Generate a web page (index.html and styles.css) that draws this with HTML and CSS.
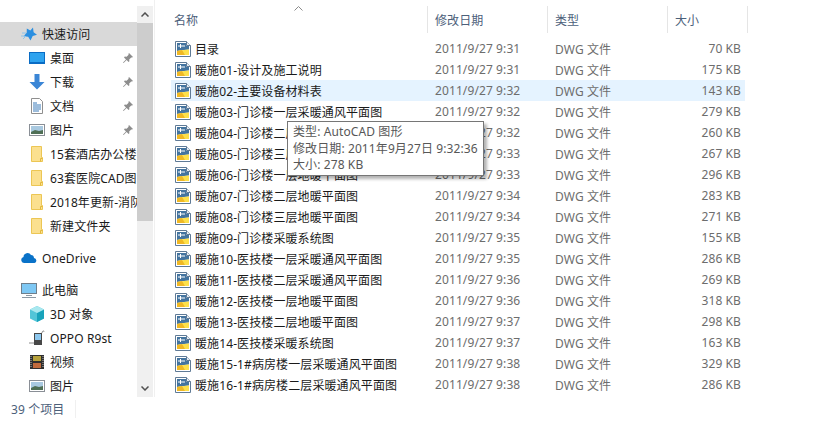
FILE: index.html
```html
<!DOCTYPE html>
<html lang="zh-CN">
<head>
  <meta charset="UTF-8" />
  <title>文件资源管理器</title>
  <link rel="stylesheet" href="styles.css">
</head>
<body>

  <svg class="defs" width="0" height="0">
    <symbol id="dwg" viewBox="0 0 16 16">
      <path d="M0.500 0.500h11l4 4v11h-15z" fill="#fff" stroke="#5f7a96"/>
      <path d="M2 2h9v3h3v3.500l-5 .5-7 1z" fill="#44749f"/>
      <path d="M2 10l7-1 5-.5v5.500h-12z" fill="#fde04a"/>
      <path d="M2 10l5-1 3 5h-8z" fill="#f0b824"/>
      <path d="M3 5h7M5.500 3v4" stroke="#fff"/>
      <path d="M11.500 0.500v4h4" fill="#e6ecf2" stroke="#5f7a96"/>
    </symbol>
    <symbol id="folder" viewBox="0 0 12 16">
      <path d="M.5 .5h10v11h1v4h-11z" fill="#fbe08f" stroke="#ecc654"/>
      <path d="M9.500 15.500v-3h2" fill="none" stroke="#e2b83f"/>
    </symbol>
    <symbol id="pin" viewBox="0 0 12 12">
      <path d="M7 1l4 4-1 .6-.8-.2-2 2 .2 1.800-.8.800-2-2-3 3-.6-.6 3-3-2-2 .8-.8 1.800.2 2-2-.2-.8z" fill="#8d8d8d"/>
    </symbol>
    <symbol id="picture" viewBox="0 0 16 12">
      <rect x="0.500" y="0.500" width="15" height="11" fill="#fff" stroke="#8a8f96"/>
      <rect x="2" y="2" width="12" height="8" fill="#a9c9e0"/>
      <path d="M2 8l4-2 4 1 4-1v4h-12z" fill="#4f6f55"/>
    </symbol>
  </svg>

  <div class="window">
    <nav class="sidebar">
      <div class="tree">
        <div class="tree-item top active">
          <svg class="ico" viewBox="0 0 16 16"><path d="M12 1.500l.6 4.800 3.400 2.500-4.300 1.100-2.200 4.600-2.300-3.800-4.700-.4 3.200-3.500.1-4.200 3.600 2z" fill="#2b8fe0"/><path d="M1 7h4M0 10h4M2 13l3-3" stroke="#8cc4ec"/></svg>
          <span>快速访问</span>
        </div>
        <div class="tree-item">
          <svg class="ico" viewBox="0 0 16 16"><rect x="0" y="2" width="16" height="12" fill="#0a6cc4"/><rect x="1" y="3" width="14" height="9" fill="#2ea3ef"/></svg>
          <span>桌面</span>
          <svg class="pin"><use href="#pin"/></svg>
        </div>
        <div class="tree-item">
          <svg class="ico" viewBox="0 0 16 16"><path d="M5.500 0h5v8h5l-7.500 7.500-7.500-7.500h5z" fill="#3b86d6"/></svg>
          <span>下载</span>
          <svg class="pin"><use href="#pin"/></svg>
        </div>
        <div class="tree-item">
          <svg class="ico" viewBox="0 0 16 16"><path d="M2.500 .5h8l3 3v12h-11z" fill="#fff" stroke="#8f8f8f"/><path d="M4 5h4M4 7h8M4 9h8M4 11h8M4 13h6" stroke="#3a7ab8"/></svg>
          <span>文档</span>
          <svg class="pin"><use href="#pin"/></svg>
        </div>
        <div class="tree-item">
          <svg class="ico"><use href="#picture"/></svg>
          <span>图片</span>
          <svg class="pin"><use href="#pin"/></svg>
        </div>
        <div class="tree-item"><svg class="ico"><use href="#folder"/></svg><span>15套酒店办公楼</span></div>
        <div class="tree-item"><svg class="ico"><use href="#folder"/></svg><span>63套医院CAD图</span></div>
        <div class="tree-item"><svg class="ico"><use href="#folder"/></svg><span>2018年更新-消防</span></div>
        <div class="tree-item"><svg class="ico"><use href="#folder"/></svg><span>新建文件夹</span></div>

        <div class="tree-item top group">
          <svg class="ico" viewBox="0 0 16 16"><path d="M3 13a3 3 0 0 1-.5-5.900 4 4 0 0 1 7.500-2 3.200 3.200 0 0 1 3 3 2.500 2.500 0 0 1 .5 4.900z" fill="#0a72c8"/></svg>
          <span>OneDrive</span>
        </div>

        <div class="tree-item top group">
          <svg class="ico" viewBox="0 0 16 16"><rect x="0.500" y="1.500" width="15" height="10" fill="#7ec8f4" stroke="#6f7f8c"/><path d="M5 13.500h6M1 15.500h14" stroke="#8b98a3"/></svg>
          <span>此电脑</span>
        </div>
        <div class="tree-item">
          <svg class="ico" viewBox="0 0 16 16"><path d="M8 0l7 3.500v9l-7 3.500-7-3.500v-9z" fill="#52c5d8"/><path d="M8 7l7-3.500v9l-7 3.500z" fill="#18a3bb"/><path d="M8 7l-7-3.500 7-3.500 7 3.500z" fill="#a9e8ef"/></svg>
          <span>3D 对象</span>
        </div>
        <div class="tree-item">
          <svg class="ico" viewBox="0 0 16 16"><rect x="5" y="3" width="8" height="12" fill="#474747"/><rect x="6" y="4" width="6" height="6" fill="#8cc7ee"/><path d="M0 13h5M13 3c0-2 2-3 2-1" stroke="#8a8a8a" fill="none"/></svg>
          <span>OPPO R9st</span>
        </div>
        <div class="tree-item">
          <svg class="ico" viewBox="0 0 16 16"><rect x="1" y="1" width="14" height="14" fill="#2e2e2e"/><rect x="4" y="2" width="8" height="5" fill="#b7a23c"/><rect x="4" y="9" width="8" height="5" fill="#c06a3c"/><path d="M2 2v12M14 2v12" stroke="#bbb" stroke-dasharray="1 1"/></svg>
          <span>视频</span>
        </div>
        <div class="tree-item">
          <svg class="ico"><use href="#picture"/></svg>
          <span>图片</span>
        </div>
      </div>

      <div class="scrollbar">
        <div class="arrow"><svg width="8" height="5" viewBox="0 0 8 5"><path d="M.5 4.500l3.500-3.500 3.500 3.500" fill="none" stroke="#505050" stroke-width="1.500"/></svg></div>
        <div class="thumb"></div>
        <div class="track"></div>
        <div class="arrow"><svg width="8" height="5" viewBox="0 0 8 5"><path d="M.5 .5l3.500 3.500 3.500-3.500" fill="none" stroke="#505050" stroke-width="1.500"/></svg></div>
      </div>
    </nav>

    <main class="files">
      <div class="head">
        <div class="col c-name">名称<svg class="sort" width="9" height="5" viewBox="0 0 9 5"><path d="M.5 4.500l4-4 4 4" fill="none" stroke="#8a8a8a"/></svg></div>
        <div class="col c-date">修改日期</div>
        <div class="col c-type">类型</div>
        <div class="col c-size">大小</div>
      </div>

      <div class="list">
        <div class="row"><div class="c-name"><svg class="dwg"><use href="#dwg"/></svg>目录</div><div class="c-date">2011/9/27 9:31</div><div class="c-type">DWG 文件</div><div class="c-size">70 KB</div></div>
        <div class="row"><div class="c-name"><svg class="dwg"><use href="#dwg"/></svg>暖施01-设计及施工说明</div><div class="c-date">2011/9/27 9:31</div><div class="c-type">DWG 文件</div><div class="c-size">175 KB</div></div>
        <div class="row hover"><div class="c-name"><svg class="dwg"><use href="#dwg"/></svg>暖施02-主要设备材料表</div><div class="c-date">2011/9/27 9:32</div><div class="c-type">DWG 文件</div><div class="c-size">143 KB</div></div>
        <div class="row"><div class="c-name"><svg class="dwg"><use href="#dwg"/></svg>暖施03-门诊楼一层采暖通风平面图</div><div class="c-date">2011/9/27 9:32</div><div class="c-type">DWG 文件</div><div class="c-size">279 KB</div></div>
        <div class="row"><div class="c-name"><svg class="dwg"><use href="#dwg"/></svg>暖施04-门诊楼二层采暖通风平面图</div><div class="c-date">2011/9/27 9:32</div><div class="c-type">DWG 文件</div><div class="c-size">260 KB</div></div>
        <div class="row"><div class="c-name"><svg class="dwg"><use href="#dwg"/></svg>暖施05-门诊楼三层采暖通风平面图</div><div class="c-date">2011/9/27 9:33</div><div class="c-type">DWG 文件</div><div class="c-size">267 KB</div></div>
        <div class="row"><div class="c-name"><svg class="dwg"><use href="#dwg"/></svg>暖施06-门诊楼一层地暖平面图</div><div class="c-date">2011/9/27 9:33</div><div class="c-type">DWG 文件</div><div class="c-size">296 KB</div></div>
        <div class="row"><div class="c-name"><svg class="dwg"><use href="#dwg"/></svg>暖施07-门诊楼二层地暖平面图</div><div class="c-date">2011/9/27 9:34</div><div class="c-type">DWG 文件</div><div class="c-size">283 KB</div></div>
        <div class="row"><div class="c-name"><svg class="dwg"><use href="#dwg"/></svg>暖施08-门诊楼三层地暖平面图</div><div class="c-date">2011/9/27 9:34</div><div class="c-type">DWG 文件</div><div class="c-size">271 KB</div></div>
        <div class="row"><div class="c-name"><svg class="dwg"><use href="#dwg"/></svg>暖施09-门诊楼采暖系统图</div><div class="c-date">2011/9/27 9:35</div><div class="c-type">DWG 文件</div><div class="c-size">155 KB</div></div>
        <div class="row"><div class="c-name"><svg class="dwg"><use href="#dwg"/></svg>暖施10-医技楼一层采暖通风平面图</div><div class="c-date">2011/9/27 9:35</div><div class="c-type">DWG 文件</div><div class="c-size">286 KB</div></div>
        <div class="row"><div class="c-name"><svg class="dwg"><use href="#dwg"/></svg>暖施11-医技楼二层采暖通风平面图</div><div class="c-date">2011/9/27 9:36</div><div class="c-type">DWG 文件</div><div class="c-size">269 KB</div></div>
        <div class="row"><div class="c-name"><svg class="dwg"><use href="#dwg"/></svg>暖施12-医技楼一层地暖平面图</div><div class="c-date">2011/9/27 9:36</div><div class="c-type">DWG 文件</div><div class="c-size">318 KB</div></div>
        <div class="row"><div class="c-name"><svg class="dwg"><use href="#dwg"/></svg>暖施13-医技楼二层地暖平面图</div><div class="c-date">2011/9/27 9:37</div><div class="c-type">DWG 文件</div><div class="c-size">298 KB</div></div>
        <div class="row"><div class="c-name"><svg class="dwg"><use href="#dwg"/></svg>暖施14-医技楼采暖系统图</div><div class="c-date">2011/9/27 9:37</div><div class="c-type">DWG 文件</div><div class="c-size">163 KB</div></div>
        <div class="row"><div class="c-name"><svg class="dwg"><use href="#dwg"/></svg>暖施15-1#病房楼一层采暖通风平面图</div><div class="c-date">2011/9/27 9:38</div><div class="c-type">DWG 文件</div><div class="c-size">329 KB</div></div>
        <div class="row"><div class="c-name"><svg class="dwg"><use href="#dwg"/></svg>暖施16-1#病房楼二层采暖通风平面图</div><div class="c-date">2011/9/27 9:38</div><div class="c-type">DWG 文件</div><div class="c-size">286 KB</div></div>
      </div>

      <div class="tooltip">
        <div>类型: AutoCAD 图形</div>
        <div>修改日期: 2011年9月27日 9:32:36</div>
        <div>大小: 278 KB</div>
      </div>
    </main>
  </div>

  <footer class="status"><span>39 个项目</span></footer>

</body>
</html>
```

FILE: styles.css
```css
html, body {
  height: 100%;
}

body {
  margin: 0;
  background: white;
  color: #1a1a1a;
  font-family: "Noto Sans", "Noto Sans CJK SC", sans-serif;
  font-size: 12px;
  letter-spacing: 0.1px;
  overflow: hidden;
}

.defs {
  position: absolute;
}

.window {
  display: flex;
  height: 397px;
}

/* left tree */
.sidebar {
  display: flex;
  width: 155px;
  flex: none;
  padding-top: 6px;
  box-sizing: border-box;
  border-right: 1px solid #f0f0f0;
}

.tree {
  width: 137px;
  flex: none;
  padding-top: 16px;
  overflow: hidden;
}

.tree-item {
  display: flex;
  align-items: center;
  height: 24px;
  padding-left: 29px;
  position: relative;
  white-space: nowrap;
}

.tree-item.top {
  padding-left: 21px;
}

.tree-item.group {
  margin-top: 8px;
}

.tree-item.active {
  background: #d9d9d9;
}

.ico {
  width: 16px;
  height: 16px;
  flex: none;
  margin-right: 5px;
}

.pin {
  width: 12px;
  height: 12px;
  position: absolute;
  right: 3px;
  top: 6px;
}

.scrollbar {
  width: 16px;
  flex: none;
  display: flex;
  flex-direction: column;
  background: #f0f0f0;
}

.arrow {
  height: 17px;
  display: flex;
  align-items: center;
  justify-content: center;
  flex: none;
}

.thumb {
  height: 198px;
  background: #cdcdcd;
}

.track {
  flex: 1;
}

/* file list */
.files {
  flex: 1;
  position: relative;
  padding: 6px 0 0 16px;
}

.head {
  display: flex;
  height: 27px;
  color: #4c607a;
}

.col {
  display: flex;
  align-items: center;
  box-sizing: border-box;
  border-right: 1px solid #e5e5e5;
  padding-left: 3px;
  position: relative;
}

.sort {
  position: absolute;
  left: 123px;
  top: 0;
}

.c-name {
  width: 257px;
  flex: none;
}

.c-date {
  width: 120px;
  flex: none;
}

.c-type {
  width: 120px;
  flex: none;
}

.c-size {
  width: 80px;
  flex: none;
}

.head .c-date, .head .c-type, .head .c-size {
  padding-left: 7px;
}

.list {
  margin-top: 5px;
}

.row {
  display: flex;
  align-items: center;
  width: 574px;
  height: 21px;
  color: #6d6d6d;
  white-space: nowrap;
}

.row.hover {
  background: #e5f3ff;
}

.row .c-name {
  display: flex;
  align-items: center;
  color: #1a1a1a;
  padding-left: 4px;
  box-sizing: border-box;
}

.row .c-date, .row .c-type {
  padding-left: 7px;
  box-sizing: border-box;
}

.row .c-size {
  width: 73px;
  text-align: right;
}

.dwg {
  width: 16px;
  height: 16px;
  flex: none;
  margin-right: 4px;
}

.tooltip {
  position: absolute;
  left: 132px;
  top: 121px;
  width: 197px;
  height: 55px;
  box-sizing: border-box;
  padding: 2px 5px;
  background: white;
  border: 1px solid #767676;
  box-shadow: 3px 3px 3px rgba(0,0,0,0.3);
  color: #575757;
  line-height: 16.5px;
  white-space: nowrap;
}

/* bottom bar */
.status {
  height: 24px;
  display: flex;
  align-items: center;
  padding-left: 11px;
  color: #4c607a;
}

.status span {
  padding-right: 11px;
  border-right: 1px solid #f0f0f0;
}
```
